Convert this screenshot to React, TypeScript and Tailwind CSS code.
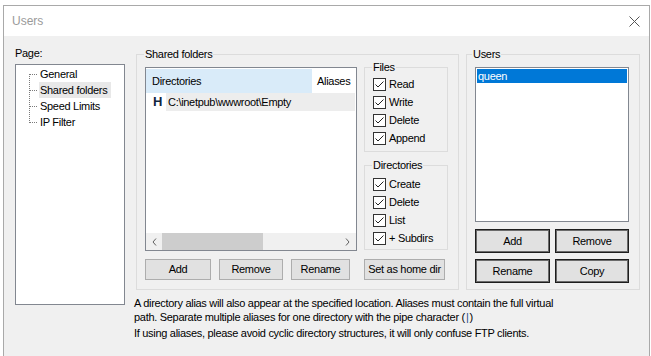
import React from "react";

const treeItems = ["General", "Shared folders", "Speed Limits", "IP Filter"];
const fileRights = ["Read", "Write", "Delete", "Append"];
const dirRights = ["Create", "Delete", "List", "+ Subdirs"];

const TreeLines = ({ first, last }: { first: boolean; last: boolean }) => (
  <svg width="23" height="16" className="shrink-0">
    <line
      x1="13.5"
      y1={first ? 8 : 0}
      x2="13.5"
      y2={last ? 9 : 16}
      stroke="#7a7a7a"
      strokeDasharray="1 1"
    />
    <line x1="14" y1="8.5" x2="22" y2="8.5" stroke="#7a7a7a" strokeDasharray="1 1" />
  </svg>
);

const Group = ({
  label,
  className,
  labelClass = "left-[7px]",
  children,
}: {
  label: string;
  className: string;
  labelClass?: string;
  children?: React.ReactNode;
}) => (
  <div className={`relative border border-[#dcdcdc] ${className}`}>
    <span className={`absolute -top-[7px] bg-[#f0f0f0] px-[1px] leading-[13px] ${labelClass}`}>
      {label}
    </span>
    {children}
  </div>
);

const CheckRow = ({ label }: { label: string }) => (
  <div className="flex items-center h-[18px]">
    <div className="w-[13px] h-[13px] border border-[#333] bg-white flex items-center justify-center shrink-0">
      <svg width="11" height="11" viewBox="0 0 11 11">
        <path d="M1.5 5.5 L4 8 L9.5 2.5" stroke="#222" strokeWidth="1" fill="none" />
      </svg>
    </div>
    <span className="ml-[3px]">{label}</span>
  </div>
);

const Btn = ({ label, className }: { label: string; className: string }) => (
  <button className={`bg-[#e1e1e1] border border-[#adadad] flex items-center justify-center ${className}`}>
    {label}
  </button>
);

const DarkBtn = ({ label, className }: { label: string; className: string }) => (
  <button
    className={`bg-[#e1e1e1] border border-[#1e1e1e] shadow-[inset_0_0_0_1px_#6b6b6b] flex items-center justify-center ${className}`}
  >
    {label}
  </button>
);

export default function App() {
  return (
    <div className="w-[651px] h-[356px] bg-white overflow-hidden font-['Liberation_Sans',Arial,sans-serif] text-[11px] leading-[13px] tracking-[-0.3px] text-black">
      <div className="ml-[3px] mt-[5px] w-[647px] h-[351px] border-l border-t border-r border-[#a9a9a9] flex flex-col">
        {/* title bar */}
        <div className="h-[30px] bg-white flex items-center justify-between shrink-0">
          <span className="ml-[8px] text-[12px] tracking-normal text-[#9a9a9a]">Users</span>
          <svg width="11" height="11" viewBox="0 0 11 11" className="mr-[9px]">
            <path d="M0.5 0.5 L10.5 10.5 M10.5 0.5 L0.5 10.5" stroke="#555" strokeWidth="1" />
          </svg>
        </div>

        <div className="flex-1 bg-[#f0f0f0] pt-[11px] pl-[11px] flex items-start">
          {/* page tree */}
          <div className="w-[110px] flex flex-col">
            <span className="leading-[13px]">Page:</span>
            <div className="mt-[4px] h-[241px] border border-[#828790] bg-white pt-[1px] flex flex-col">
              {treeItems.map((item, i) => (
                <div key={item} className="flex items-center h-[16px]">
                  <TreeLines first={i === 0} last={i === treeItems.length - 1} />
                  <span
                    className={`h-[16px] leading-[16px] pl-[1px] pr-[4px] ${
                      item === "Shared folders" ? "bg-[#e8e8e8]" : ""
                    }`}
                  >
                    {item}
                  </span>
                </div>
              ))}
            </div>
          </div>

          <div className="ml-[11px] mt-[7px] flex flex-col">
            <div className="flex items-start">
              {/* shared folders */}
              <Group label="Shared folders" className="w-[323px] h-[236px] pt-[12px] pl-[8px]">
                <div className="flex items-start">
                  <div className="w-[212px] h-[184px] border border-[#828790] bg-white flex flex-col">
                    <div className="flex h-[24px] mt-[1px] shrink-0">
                      <div className="w-[166px] bg-[#d9ebf9] pl-[6px] flex items-center">Directories</div>
                      <div className="pl-[5px] flex items-center">Aliases</div>
                    </div>
                    <div className="flex h-[18px] shrink-0">
                      <span className="w-[20px] pl-[7px] font-bold text-[13px] leading-[18px] tracking-normal text-[#10263f]">
                        H
                      </span>
                      <div className="flex-1 mr-[1px] bg-[#ededed] pl-[2px] flex items-center">
                        C:\inetpub\wwwroot\Empty
                      </div>
                    </div>
                    <div className="flex-1" />
                    <div className="h-[17px] bg-[#f0f0f0] flex items-stretch shrink-0">
                      <div className="w-[16px] flex items-center justify-center">
                        <svg width="5" height="8" viewBox="0 0 5 8">
                          <path d="M4 0.5 L1 4 L4 7.5" stroke="#606060" fill="none" />
                        </svg>
                      </div>
                      <div className="w-[101px] bg-[#cdcdcd]" />
                      <div className="flex-1" />
                      <div className="w-[17px] flex items-center justify-center">
                        <svg width="5" height="8" viewBox="0 0 5 8">
                          <path d="M1 0.5 L4 4 L1 7.5" stroke="#606060" fill="none" />
                        </svg>
                      </div>
                    </div>
                  </div>

                  <div className="ml-[7px] w-[84px] flex flex-col">
                    <Group label="Files" className="h-[85px] pt-[7px] pl-[8px]">
                      {fileRights.map((r) => (
                        <CheckRow key={r} label={r} />
                      ))}
                    </Group>
                    <Group label="Directories" className="mt-[13px] h-[85px] pt-[9px] pl-[8px]">
                      {dirRights.map((r) => (
                        <CheckRow key={r} label={r} />
                      ))}
                    </Group>
                  </div>
                </div>

                <div className="flex mt-[8px] h-[21px]">
                  <Btn label="Add" className="w-[66px]" />
                  <Btn label="Remove" className="ml-[8px] w-[64px]" />
                  <Btn label="Rename" className="ml-[8px] w-[59px]" />
                  <Btn label="Set as home dir" className="ml-[14px] w-[81px]" />
                </div>
              </Group>

              {/* users */}
              <Group
                label="Users"
                labelClass="left-[5px]"
                className="ml-[7px] w-[174px] h-[236px] pt-[12px] pl-[8px]"
              >
                <div className="w-[154px] h-[155px] border border-[#828790] bg-white pt-[1px] px-[1px]">
                  <div className="h-[14px] bg-[#0078d7] text-white pl-[1px] leading-[14px]">queen</div>
                </div>
                <div className="flex mt-[7px] h-[24px]">
                  <DarkBtn label="Add" className="w-[75px]" />
                  <DarkBtn label="Remove" className="ml-[5px] w-[74px]" />
                </div>
                <div className="flex mt-[6px] h-[24px]">
                  <DarkBtn label="Rename" className="w-[75px]" />
                  <DarkBtn label="Copy" className="ml-[5px] w-[74px]" />
                </div>
              </Group>
            </div>

            <div className="-ml-[2px] mt-[6px] whitespace-nowrap leading-[14px]">
              <p>
                A directory alias will also appear at the specified location. Aliases must contain the full virtual
                <br />
                path. Separate multiple aliases for one directory with the pipe character (
                <span className="mx-[1px] text-[#2a4a8a]">|</span>)
              </p>
              <p className="mt-[2px]">
                If using aliases, please avoid cyclic directory structures, it will only confuse FTP clients.
              </p>
            </div>
          </div>
        </div>
      </div>
    </div>
  );
}
